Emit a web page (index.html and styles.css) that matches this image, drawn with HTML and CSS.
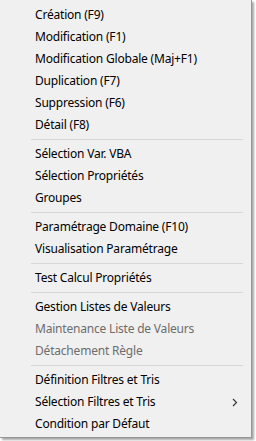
FILE: index.html
```html
<!DOCTYPE html>
<html>
<head>
<meta charset="utf-8">
<link rel="stylesheet" href="styles.css">
</head>
<body>
<div class="menu">
  <div class="item">Création (F9)</div>
  <div class="item">Modification (F1)</div>
  <div class="item">Modification Globale (Maj+F1)</div>
  <div class="item">Duplication (F7)</div>
  <div class="item">Suppression (F6)</div>
  <div class="item">Détail (F8)</div>
  <div class="sep"></div>
  <div class="item">Sélection Var. VBA</div>
  <div class="item">Sélection Propriétés</div>
  <div class="item">Groupes</div>
  <div class="sep"></div>
  <div class="item">Paramétrage Domaine (F10)</div>
  <div class="item">Visualisation Paramétrage</div>
  <div class="sep"></div>
  <div class="item">Test Calcul Propriétés</div>
  <div class="sep"></div>
  <div class="item">Gestion Listes de Valeurs</div>
  <div class="item disabled">Maintenance Liste de Valeurs</div>
  <div class="item disabled">Détachement Règle</div>
  <div class="sep"></div>
  <div class="item">Définition Filtres et Tris</div>
  <div class="item sub">Sélection Filtres et Tris
    <svg class="arrow" width="6" height="9" viewBox="0 0 6 9"><path d="M1 1 L4.5 4.5 L1 8" fill="none" stroke="#333" stroke-width="1.1"/></svg>
  </div>
  <div class="item">Condition par Défaut</div>
</div>
</body>
</html>
```
FILE: styles.css
```css
html, body {
  margin: 0;
  padding: 0;
  background: #ffffff;
}
body {
  width: 256px;
  height: 441px;
  overflow: hidden;
}
.menu {
  width: 251px;
  background: #f0f0f0;
  border-right: 1px solid #979797;
  border-bottom: 1px solid #979797;
  padding: 4px 0 2px 0;
  box-shadow: 2px 2px 2px rgba(0, 0, 0, 0.35);
  font-family: "Noto Sans", sans-serif;
  font-size: 12px;
  letter-spacing: -0.2px;
  color: #000;
}
.item {
  height: 22px;
  line-height: 22px;
  padding-left: 35px;
  display: flex;
  align-items: center;
  white-space: nowrap;
}
.item.disabled {
  color: #6d6d6d;
}
.item.sub {
  justify-content: space-between;
  padding-right: 13px;
}
.sep {
  height: 7px;
  display: flex;
  align-items: center;
  padding-left: 31px;
  padding-right: 8px;
}
.sep::before {
  content: "";
  flex: 1;
  height: 1px;
  background: #d7d7d7;
}
```
